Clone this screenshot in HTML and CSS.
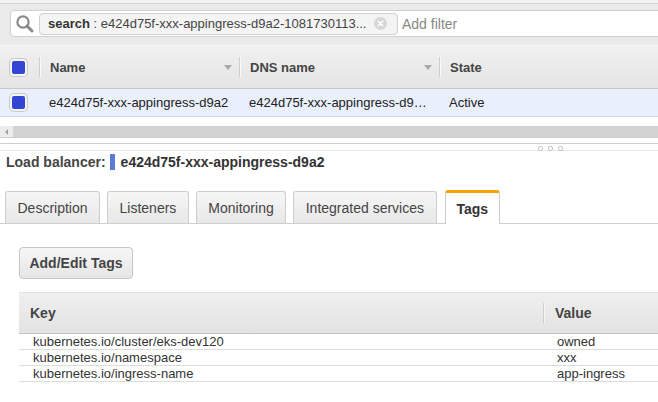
FILE: index.html
```html
<!DOCTYPE html>
<html>
<head>
<meta charset="utf-8">
<link rel="stylesheet" href="styles.css">
</head>
<body>
<div class="page">
  <div class="topstrip"></div>
  <div class="filterbar">
    <div class="searchbox">
      <svg class="search-icon" width="20" height="20" viewBox="0 0 20 20">
        <circle cx="8" cy="8" r="5.6" fill="none" stroke="#8a8a8a" stroke-width="2.2"/>
        <line x1="12" y1="12" x2="17" y2="17" stroke="#8a8a8a" stroke-width="3" stroke-linecap="round"/>
      </svg>
      <div class="chip">
        <span class="chip-text"><b>search</b> : e424d75f-xxx-appingress-d9a2-1081730113...</span>
        <svg class="chip-x" width="13" height="13" viewBox="0 0 13 13">
          <circle cx="6.5" cy="6.5" r="6.5" fill="#d6d6d6"/>
          <path d="M4.3 4.3 L8.7 8.7 M8.7 4.3 L4.3 8.7" stroke="#fff" stroke-width="1.6" stroke-linecap="round"/>
        </svg>
      </div>
      <span class="placeholder">Add filter</span>
    </div>
  </div>

  <div class="grid">
    <div class="grid-head">
      <div class="cell cell-check"><span class="checkbox"></span></div>
      <div class="cell cell-name"><span class="sep"></span><span class="htext">Name</span><span class="sort"></span></div>
      <div class="cell cell-dns"><span class="sep"></span><span class="htext">DNS name</span><span class="sort"></span></div>
      <div class="cell cell-state"><span class="sep"></span><span class="htext">State</span></div>
    </div>
    <div class="grid-row">
      <div class="cell cell-check"><span class="checkbox"></span></div>
      <div class="cell cell-name"><span class="rtext">e424d75f-xxx-appingress-d9a2</span></div>
      <div class="cell cell-dns"><span class="rtext">e424d75f-xxx-appingress-d9…</span></div>
      <div class="cell cell-state"><span class="rtext">Active</span></div>
    </div>
  </div>

  <div class="hscroll">
    <div class="hscroll-btn"><span class="arrow-left"></span></div>
    <div class="hscroll-track"></div>
  </div>

  <div class="splitter">
    <div class="dots"><span></span><span></span><span></span></div>
  </div>

  <div class="lb-title">
    <span class="lb-label">Load balancer:</span>
    <span class="lb-mark"></span>
    <span class="lb-name">e424d75f-xxx-appingress-d9a2</span>
  </div>

  <div class="tabs">
    <div class="tab">Description</div>
    <div class="tab">Listeners</div>
    <div class="tab">Monitoring</div>
    <div class="tab">Integrated services</div>
    <div class="tab tab-active">Tags</div>
  </div>

  <div class="panel">
    <button class="btn">Add/Edit Tags</button>
    <div class="tags">
      <div class="tags-head">
        <div class="tcol-key">Key</div>
        <div class="tcol-val"><span class="sep2"></span>Value</div>
      </div>
      <div class="tags-row"><div class="tcol-key">kubernetes.io/cluster/eks-dev120</div><div class="tcol-val">owned</div></div>
      <div class="tags-row"><div class="tcol-key">kubernetes.io/namespace</div><div class="tcol-val">xxx</div></div>
      <div class="tags-row"><div class="tcol-key">kubernetes.io/ingress-name</div><div class="tcol-val">app-ingress</div></div>
    </div>
  </div>
</div>
</body>
</html>
```

FILE: styles.css
```css
html, body {
  margin: 0;
  padding: 0;
  background: #fff;
}
body {
  width: 658px;
  height: 402px;
  overflow: hidden;
  font-family: "Liberation Sans", Arial, sans-serif;
  font-size: 14px;
  color: #333;
}
.page {
  width: 658px;
}
.topstrip {
  height: 3px;
  background: #f2f2f2;
}
.filterbar {
  border-top: 1px solid #d3d3d3;
  background: #eaeaea;
  padding: 6px 0 8px 10px;
  display: flex;
}
.searchbox {
  flex: 1;
  margin-right: -8px;
  height: 25px;
  background: #fff;
  border: 1px solid #d0d0d0;
  border-radius: 4px;
  display: flex;
  align-items: center;
}
.search-icon {
  margin-left: 4px;
  margin-right: 4px;
  flex: none;
}
.chip {
  width: 339px;
  height: 20px;
  background: #f4f4f4;
  border: 1px solid #cfcfcf;
  border-radius: 4px;
  display: flex;
  align-items: center;
  padding: 0 10px 0 8px;
  flex: none;
}
.chip-text {
  flex: 1;
  white-space: nowrap;
  overflow: hidden;
  color: #444;
  font-size: 13px;
}
.chip-text b {
  color: #333;
}
.chip-x {
  flex: none;
}
.placeholder {
  margin-left: 4px;
  color: #888;
  font-size: 14px;
}

/* grid */
.grid {
  border-top: 1px solid #f7f7f7;
}
.grid-head {
  display: flex;
  height: 42px;
  background: linear-gradient(#f0f0f0, #e5e5e5);
  border-bottom: 1px solid #c8c8c8;
}
.grid-row {
  display: flex;
  height: 27px;
  background: #e9effb;
  border-bottom: 1px solid #d8dbe0;
}
.cell {
  position: relative;
  display: flex;
  align-items: center;
  box-sizing: border-box;
}
.cell-check {
  width: 39px;
  padding-left: 10px;
}
.cell-name, .cell-dns {
  width: 200px;
}
.cell-state {
  flex: 1;
}
.sep {
  width: 1px;
  height: 20px;
  background: #cfcfcf;
  border-right: 1px solid #fafafa;
  margin-right: 9px;
}
.htext {
  font-weight: bold;
  color: #444;
  font-size: 13px;
  flex: 1;
}
.sort {
  width: 0;
  height: 0;
  border-left: 4px solid transparent;
  border-right: 4px solid transparent;
  border-top: 5px solid #a8a8a8;
  margin-right: 7px;
}
.rtext {
  padding-left: 10px;
  color: #222;
  font-size: 13px;
  white-space: nowrap;
}
.checkbox {
  width: 13px;
  height: 13px;
  background: #3346d3;
  border: 2px solid #f4f4f4;
  border-radius: 4px;
  box-shadow: 0 0 0 1px #c9c9c9;
}

/* horizontal scrollbar */
.hscroll {
  margin-top: 9px;
  display: flex;
  height: 11px;
  border-bottom: 1px solid #cfcfcf;
}
.hscroll-btn {
  width: 13px;
  background: #ececec;
  display: flex;
  align-items: center;
  justify-content: center;
}
.arrow-left {
  width: 0;
  height: 0;
  border-top: 3px solid transparent;
  border-bottom: 3px solid transparent;
  border-right: 3px solid #a0a0a0;
}
.hscroll-track {
  flex: 1;
  background: #d3d3d3;
}

/* splitter */
.splitter {
  margin-top: 5px;
  height: 6px;
  border-top: 1px solid #cfcfcf;
  border-bottom: 1px solid #e8e8e8;
  display: flex;
  justify-content: flex-end;
  align-items: flex-end;
}
.dots {
  display: flex;
  gap: 5px;
  margin-right: 95px;
  margin-bottom: -1px;
}
.dots span {
  width: 3px;
  height: 3px;
  border: 1px solid #c4c4c4;
  border-radius: 2px;
}

/* load balancer title */
.lb-title {
  display: flex;
  align-items: center;
  padding-left: 6px;
  margin-top: 2px;
  height: 18px;
  font-weight: bold;
  font-size: 14px;
  color: #444;
}
.lb-mark {
  width: 5px;
  height: 16px;
  background: #5b7bd5;
  margin: 0 6px 0 4px;
}
.lb-name {
  color: #333;
}

/* tabs */
.tabs {
  margin-top: 19px;
  display: flex;
  align-items: flex-end;
  gap: 7px;
  padding-left: 5px;
  border-bottom: 1px solid #cfcfcf;
  height: 33px;
}
.tab {
  height: 32px;
  box-sizing: border-box;
  padding: 0 11.5px;
  display: flex;
  align-items: center;
  background: linear-gradient(#f6f6f6, #e8e8e8);
  border: 1px solid #cdcdcd;
  border-bottom: none;
  border-radius: 3px 3px 0 0;
  color: #444;
  font-size: 14px;
  margin-bottom: 0;
}
.tab-active {
  height: 34px;
  margin-bottom: -1px;
  background: #fff;
  border-top: 3px solid #f8a100;
  font-weight: bold;
  color: #333;
  padding: 0 11px;
  margin-left: 1px;
}

/* panel */
.panel {
  padding: 23px 0 0 19px;
}
.btn {
  display: block;
  height: 32px;
  width: 114px;
  padding: 0;
  background: linear-gradient(#f6f6f6, #e6e6e6);
  border: 1px solid #c6c6c6;
  border-radius: 4px;
  font-family: "Liberation Sans", Arial, sans-serif;
  font-size: 14px;
  font-weight: bold;
  color: #444;
}
.tags {
  margin-top: 13px;
  margin-right: -10px;
}
.tags-head {
  display: flex;
  height: 40px;
  align-items: center;
  background: linear-gradient(#efefef, #e3e3e3);
  border-top: 1px solid #e2e2e2;
  border-bottom: 1px solid #c3c3c3;
  font-weight: bold;
  color: #444;
  font-size: 14px;
}
.tags-head .tcol-key {
  padding-left: 11px;
}
.tcol-key {
  width: 524px;
  box-sizing: border-box;
}
.tcol-val {
  flex: 1;
  display: flex;
  align-items: center;
}
.sep2 {
  width: 1px;
  height: 20px;
  background: #cfcfcf;
  border-right: 1px solid #f6f6f6;
  margin-right: 10px;
}
.tags-row {
  display: flex;
  height: 15px;
  line-height: 15px;
  border-bottom: 1px solid #dcdcdc;
  font-size: 13px;
  color: #333;
}
.tags-row .tcol-key {
  padding-left: 14px;
}
.tags-row .tcol-val {
  padding-left: 14px;
}
```
